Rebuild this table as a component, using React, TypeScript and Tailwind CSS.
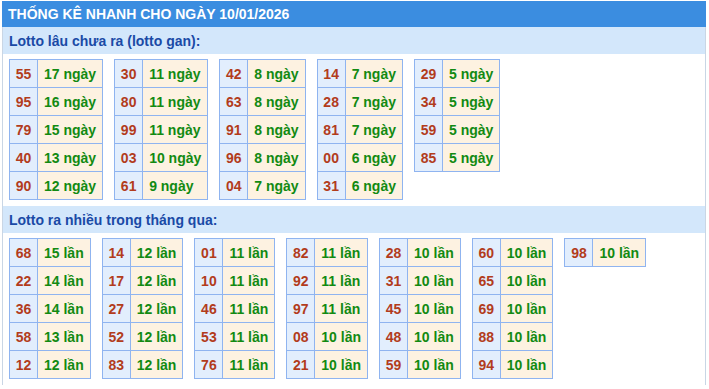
import React from "react";

type Item = [string, string];

const gan: Item[][] = [
  [["55", "17 ngày"], ["95", "16 ngày"], ["79", "15 ngày"], ["40", "13 ngày"], ["90", "12 ngày"]],
  [["30", "11 ngày"], ["80", "11 ngày"], ["99", "11 ngày"], ["03", "10 ngày"], ["61", "9 ngày"]],
  [["42", "8 ngày"], ["63", "8 ngày"], ["91", "8 ngày"], ["96", "8 ngày"], ["04", "7 ngày"]],
  [["14", "7 ngày"], ["28", "7 ngày"], ["81", "7 ngày"], ["00", "6 ngày"], ["31", "6 ngày"]],
  [["29", "5 ngày"], ["34", "5 ngày"], ["59", "5 ngày"], ["85", "5 ngày"]],
];

const nhieu: Item[][] = [
  [["68", "15 lần"], ["22", "14 lần"], ["36", "14 lần"], ["58", "13 lần"], ["12", "12 lần"]],
  [["14", "12 lần"], ["17", "12 lần"], ["27", "12 lần"], ["52", "12 lần"], ["83", "12 lần"]],
  [["01", "11 lần"], ["10", "11 lần"], ["46", "11 lần"], ["53", "11 lần"], ["76", "11 lần"]],
  [["82", "11 lần"], ["92", "11 lần"], ["97", "11 lần"], ["08", "10 lần"], ["21", "10 lần"]],
  [["28", "10 lần"], ["31", "10 lần"], ["45", "10 lần"], ["48", "10 lần"], ["59", "10 lần"]],
  [["60", "10 lần"], ["65", "10 lần"], ["69", "10 lần"], ["88", "10 lần"], ["94", "10 lần"]],
  [["98", "10 lần"]],
];

function Block({ items }: { items: Item[] }) {
  return (
    <div className="grid grid-cols-[28px_auto] auto-rows-[28px] border-l border-t border-[#8fb4f0] self-start">
      {items.map(([n, v], i) => (
        <React.Fragment key={i}>
          <div className="border-r border-b border-[#8fb4f0] bg-[#e2eefd] text-[#b23c1c] flex items-center justify-center">
            {n}
          </div>
          <div className="px-[6px] border-r border-b border-[#8fb4f0] bg-[#fdf2e1] text-[#128a12] flex items-center whitespace-nowrap">
            {v}
          </div>
        </React.Fragment>
      ))}
    </div>
  );
}

function Section({ title, blocks }: { title: string; blocks: Item[][] }) {
  return (
    <div>
      <div className="h-[27px] bg-[#d3e7fb] text-[#1a4aa6] pl-[6px] flex items-center">{title}</div>
      <div className="flex gap-[11px] pl-[6px] pt-[5px] pb-[6px] bg-white">
        {blocks.map((b, i) => (
          <Block key={i} items={b} />
        ))}
      </div>
    </div>
  );
}

export default function App() {
  return (
    <div
      className="bg-white w-[709px] h-[389px] overflow-hidden pt-[1px] pl-[2px]"
      style={{ fontFamily: '"Liberation Sans", Arial, sans-serif' }}
    >
      <div className="w-[704px] border-x border-[#c9d6e5] text-[14px] font-bold leading-none">
        <div className="h-[26px] bg-[#3b8de0] text-white flex items-center -mx-px px-[6px]">
          THỐNG KÊ NHANH CHO NGÀY 10/01/2026
        </div>
        <Section title="Lotto lâu chưa ra (lotto gan):" blocks={gan} />
        <Section title="Lotto ra nhiều trong tháng qua:" blocks={nhieu} />
      </div>
    </div>
  );
}
